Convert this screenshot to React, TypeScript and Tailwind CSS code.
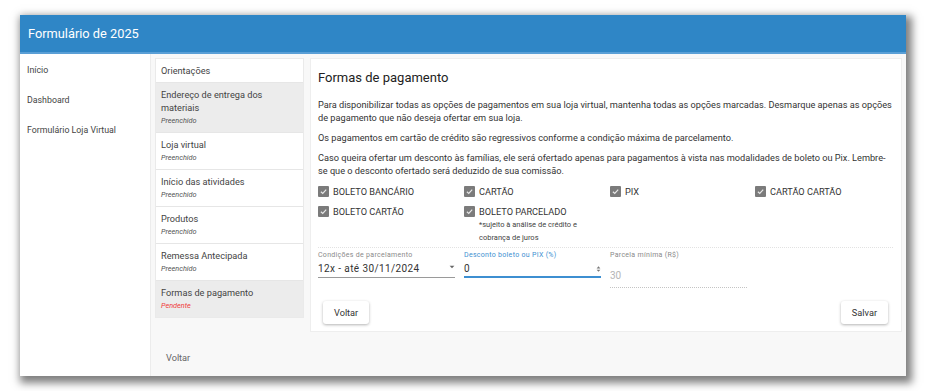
import React from 'react';

const font = { fontFamily: 'Roboto, "Noto Sans", sans-serif' };

const steps = [
  { title: 'Orientações', status: '' },
  { title: 'Endereço de entrega dos materiais', status: 'Preenchido', active: true },
  { title: 'Loja virtual', status: 'Preenchido' },
  { title: 'Início das atividades', status: 'Preenchido' },
  { title: 'Produtos', status: 'Preenchido' },
  { title: 'Remessa Antecipada', status: 'Preenchido' },
  { title: 'Formas de pagamento', status: 'Pendente', active: true },
];

const Check = ({ label, note }: { label: string; note?: React.ReactNode }) => (
  <div className="flex items-start gap-[4px]">
    <span className="mt-[1px] flex h-[11px] w-[11px] shrink-0 items-center justify-center rounded-[1px] bg-[#7b7b7b]">
      <svg viewBox="0 0 12 12" className="h-[9px] w-[9px]" fill="none" stroke="#e8e8e8" strokeWidth="1.6">
        <path d="M2.5 6.3 L5 8.6 L9.6 3.6" />
      </svg>
    </span>
    <div>
      <div className="text-[9.2px] leading-[13px] text-[#333]">{label}</div>
      {note && <div className="text-[7.5px] leading-[13px] text-[#444]">{note}</div>}
    </div>
  </div>
);

export default function App() {
  return (
    <div className="h-[391px] w-[926px] overflow-hidden bg-white pl-[20px] pt-[15px]" style={font}>
      <div className="flex h-[361px] w-[886px] flex-col bg-[#f8f8f8] shadow-[3px_4px_8px_3px_rgba(0,0,0,0.5)]">
        {/* Header */}
        <div className="flex h-[39px] shrink-0 items-center border-b-2 border-[#5a9fd6] bg-[#2f86c6] px-[8px]">
          <span className="text-[12.8px] text-white">Formulário de 2025</span>
        </div>

        <div className="flex min-h-0 flex-1">
          {/* Sidebar */}
          <div className="w-[131px] shrink-0 border-r border-[#ececec] bg-white px-[7px] pt-[9px] text-[8.8px] text-[#444]">
            <div className="h-[30px] leading-[14px]">Início</div>
            <div className="h-[30px] leading-[14px]">Dashboard</div>
            <div className="h-[30px] leading-[14px]">Formulário Loja Virtual</div>
          </div>

          {/* Main */}
          <div className="flex flex-1 flex-col px-[4px] pt-[4px]">
            <div className="flex items-start gap-[6px]">
              <div className="w-[149px] shrink-0 border border-[#eaeaea] bg-white">
                {steps.map((s, i) => (
                  <div
                    key={i}
                    className={
                      'border-b border-[#e6e6e6] px-[5px] last:border-b-0 ' +
                      (s.active ? 'bg-[#ececec] ' : 'bg-white ') +
                      (s.status ? 'pb-[5px] pt-[5px]' : 'py-[5px]')
                    }
                  >
                    <div className="text-[9.2px] leading-[13px] text-[#444]">{s.title}</div>
                    {s.status && (
                      <div
                        className={
                          'text-[7.3px] italic leading-[13px] ' +
                          (s.status === 'Pendente' ? 'text-[#f03c3c]' : 'text-[#555]')
                        }
                      >
                        {s.status}
                      </div>
                    )}
                  </div>
                ))}
              </div>

              {/* Content card */}
              <div className="flex h-[274px] flex-1 flex-col border border-[#eeeeee] bg-white pl-[7px] pr-[8px] pt-[11px]">
                <div className="text-[13px] leading-[16px] text-[#222]">Formas de pagamento</div>
                <div className="mt-[12px] space-y-[7px] text-[9.2px] leading-[13px] text-[#333]">
                  <p>
                    Para disponibilizar todas as opções de pagamentos em sua loja virtual, mantenha todas as opções marcadas. Desmarque apenas as opções de pagamento que não deseja ofertar em sua loja.
                  </p>
                  <p>Os pagamentos em cartão de crédito são regressivos conforme a condição máxima de parcelamento.</p>
                  <p>
                    Caso queira ofertar um desconto às famílias, ele será ofertado apenas para pagamentos à vista nas modalidades de boleto ou Pix. Lembre-se que o desconto ofertado será deduzido de sua comissão.
                  </p>
                </div>

                <div className="mt-[8px] grid grid-cols-[146px_146px_145px_1fr] gap-y-[7px] border-b border-dotted border-[#e2e2e2] pb-[3px]">
                  <Check label="BOLETO BANCÁRIO" />
                  <Check label="CARTÃO" />
                  <Check label="PIX" />
                  <Check label="CARTÃO CARTÃO" />
                  <Check label="BOLETO CARTÃO" />
                  <Check
                    label="BOLETO PARCELADO"
                    note={
                      <>
                        *sujeito à análise de crédito e
                        <br />
                        cobrança de juros
                      </>
                    }
                  />
                </div>

                <div className="mt-[2px] grid grid-cols-[146px_146px_146px_1fr]">
                  <div className="pr-[9px]">
                    <div className="text-[7px] leading-[10px] tracking-[0.3px] text-[#8a8a8a]">Condições de parcelamento</div>
                    <div className="mt-[2px] flex items-center justify-between border-b border-[#9a9a9a] pb-[1px]">
                      <span className="text-[10px] leading-[14px] tracking-[0.4px] text-[#333]">12x - até 30/11/2024</span>
                      <svg viewBox="0 0 10 10" className="mb-[4px] h-[6px] w-[6px]">
                        <path d="M1 3 L9 3 L5 7 Z" fill="#666" />
                      </svg>
                    </div>
                  </div>
                  <div className="pr-[9px]">
                    <div className="text-[7px] leading-[10px] tracking-[0.3px] text-[#3d8fd1]">Desconto boleto ou PIX (%)</div>
                    <div className="mt-[2px] flex items-center justify-between border-b-2 border-[#3d8fd1]">
                      <span className="text-[10px] leading-[14px] text-[#333]">0</span>
                      <svg viewBox="0 0 8 12" className="h-[8px] w-[5px]">
                        <path d="M1 5 L4 1.5 L7 5 Z M1 7 L4 10.5 L7 7 Z" fill="#777" />
                      </svg>
                    </div>
                  </div>
                  <div className="pr-[9px]">
                    <div className="text-[7px] leading-[10px] tracking-[0.3px] text-[#8a8a8a]">Parcela mínima (R$)</div>
                    <div className="mt-[2px] border-b border-dotted border-[#c4c4c4] pb-[1px]">
                      <span className="text-[10px] leading-[14px] text-[#b5b5b5]">30</span>
                    </div>
                  </div>
                </div>

                <div className="mt-auto flex justify-between px-[5px] pb-[7px]">
                  <button className="h-[23px] rounded-[3px] bg-white px-[11px] text-[9.2px] text-[#333] shadow-[0_1px_3px_rgba(0,0,0,0.3)]">
                    Voltar
                  </button>
                  <button className="h-[23px] rounded-[3px] bg-white px-[11px] text-[9.2px] text-[#333] shadow-[0_1px_3px_rgba(0,0,0,0.3)]">
                    Salvar
                  </button>
                </div>
              </div>
            </div>

            <div className="mt-[19px] pl-[11px] text-[9.2px] leading-[14px] text-[#666]">Voltar</div>
          </div>
        </div>
      </div>
    </div>
  );
}
